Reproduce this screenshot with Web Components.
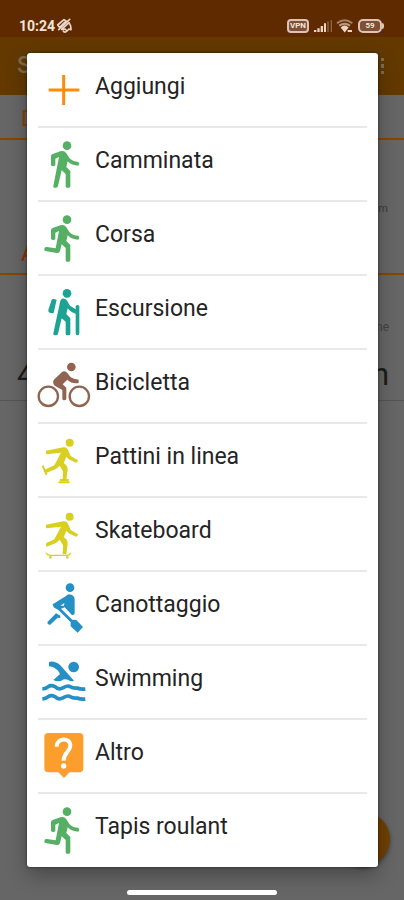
<!DOCTYPE html>
<html lang="it">
<head>
<meta charset="utf-8">
<meta name="viewport" content="width=device-width, initial-scale=1">
<title>Attività</title>
<style>
  body { margin: 0; font-family: Roboto, "Noto Sans", sans-serif; background: #666; }
</style>
</head>
<body>
<activity-screen></activity-screen>

<template id="status-bar">
  <style>
    :host { display: flex; align-items: center; justify-content: space-between; height: 37px; padding: 14px 20px 0 19px; box-sizing: border-box; background: #5f2a00; color: #f3e4d8; }
    div { display: flex; align-items: center; }
    time { font-size: 14px; line-height: 16px; font-weight: 700; }
    .right { gap: 4px; }
    .badge, .battery { box-sizing: border-box; border: 2px solid #dcc3b5; border-radius: 4px; height: 14px; width: 22px; font-size: 8px; line-height: 10px; font-weight: 700; text-align: center; background: #7d5038; }
    .battery { width: 24px; border-radius: 5px; }
    .tip { width: 2px; height: 6px; border-radius: 0 2px 2px 0; background: #dcc3b5; margin-left: -4px; }
    svg { display: block; }
  </style>
  <div><time>10:24</time>
    <svg width="19" height="18" viewBox="0 0 57 54" fill="none" stroke="#ead5c8" stroke-width="5" stroke-linecap="round" stroke-linejoin="round"><path d="M8 24L27 8 33 12 14 31ZM20 37L42 17 47 27 48 38 42 36 36 42 30 36ZM11 38L44 7M25 42q3 5 8 2"/></svg>
  </div>
  <div class="right">
    <span class="badge">VPN</span>
    <svg width="19" height="14" viewBox="0 0 57 42" fill="#ead5c8"><path d="M3 33h7v6H3zM13 28h7v11h-7zM23 21h7v18h-7zM33 13h6v26h-6z"/><path d="M43 7h4v32h-4zM53 3h4v36h-4z" opacity=".35"/></svg>
    <svg width="18" height="14" viewBox="0 0 54 42" fill="none" stroke="#ead5c8" stroke-width="6"><path d="M3 13Q26-5 49 13" opacity=".5"/><path d="M10 20Q26 8 42 20" opacity=".65"/><path d="M18 26Q26 19 34 26L26 36Z" fill="#ead5c8"/><path d="M35 36h13"/></svg>
    <span class="battery">59</span><span class="tip"></span>
  </div>
</template>

<template id="app-header">
  <style>
    :host { display: flex; align-items: center; justify-content: space-between; height: 58px; padding: 0 18px 0 17px; box-sizing: border-box; background: #633900; color: #7d6a50; }
    h1 { margin: 0; font-size: 23px; line-height: 28px; font-weight: 500; }
    button { border: 0; padding: 0; background: none; display: flex; }
  </style>
  <h1>S</h1>
  <button aria-label="Menu"><svg width="12" height="20" viewBox="0 0 12 20" fill="#77705f"><path d="M7 2h3v3H7zM7 8h3v4H7zM7 15h3v3H7z"/></svg></button>
</template>

<template id="stat-section">
  <style>
    :host { display: block; }
    header { height: 45px; box-sizing: border-box; padding: 0 21px; border-bottom: 2px solid #874500; font-size: 22px; line-height: 48px; }
  </style>
  <header><slot name="title"></slot></header>
  <slot></slot>
</template>

<template id="activity-icon">
  <style>
    :host { display: block; flex: none; }
    svg { display: block; }
    .f { fill: currentColor; stroke: none; }
  </style>
  <svg width="54" height="74" fill="none" stroke="currentColor" stroke-linecap="round" stroke-linejoin="round"></svg>
</template>

<template id="activity-row">
  <style>
    :host { display: block; padding: 0 11px 0 10px; }
    button { display: flex; align-items: center; width: 100%; height: 74px; box-sizing: border-box; border: 0; padding: 0; margin: 0; background: none; font: 23px/28px Roboto, "Noto Sans", sans-serif; color: #242424; text-align: left; gap: 4px; }
    hr { border: 0; height: 2px; margin: -1px 0 -1px 1px; background: #e9e9e9; }
    :host(:last-child) hr { display: none; }
    span { padding-bottom: 7px; white-space: nowrap; }
  </style>
  <button type="button"><activity-icon></activity-icon><span><slot></slot></span></button>
  <hr>
</template>

<template id="activity-dialog">
  <style>
    :host { display: block; background: #fff; border-radius: 3px; box-shadow: 0 0 3px rgba(0,0,0,.55), 0 8px 20px rgba(0,0,0,.3); }
  </style>
  <slot></slot>
</template>

<template id="activity-screen">
  <style>
    :host { display: block; position: relative; min-height: 100vh; background: #666; }
    main { display: block; }
    .body1 { height: 90px; padding: 62px 16px 0; box-sizing: border-box; text-align: right; font-size: 11px; line-height: 14px; color: #3c3c3c; }
    .body2 { display: flex; flex-direction: column; height: 126px; padding: 44px 15px 0 17px; box-sizing: border-box; border-bottom: 1px solid #555; text-align: right; color: #1c1c1c; }
    small { font-size: 12px; line-height: 16px; color: #444; }
    .values { display: flex; justify-content: space-between; font-size: 31px; line-height: 36px; margin-top: 22px; }
    .t1 { color: #864300; } .t2 { color: #972d00; }
    .overlay { position: absolute; inset: 53px 26px auto 27px; }
    .fab { position: absolute; right: 14px; bottom: 34px; width: 54px; height: 54px; border: 0; border-radius: 50%; background: #704000; box-shadow: 0 2px 4px rgba(0,0,0,.4); }
    .home { position: absolute; bottom: 5px; left: 0; right: 0; display: flex; justify-content: center; }
    .home i { width: 37%; height: 5px; border-radius: 3px; background: #fff; }
  </style>
  <status-bar></status-bar>
  <app-header></app-header>
  <main>
    <stat-section><span slot="title" class="t1">D</span><div class="body1">m</div></stat-section>
    <stat-section><span slot="title" class="t2">A</span><div class="body2"><small>ne</small><div class="values"><span>4</span><span>n</span></div></div></stat-section>
  </main>
  <button class="fab" aria-label="Avvia"></button>
  <div class="overlay"><activity-dialog role="dialog">
    <activity-row icon="add">Aggiungi</activity-row>
    <activity-row icon="walk">Camminata</activity-row>
    <activity-row icon="run">Corsa</activity-row>
    <activity-row icon="hike">Escursione</activity-row>
    <activity-row icon="bike">Bicicletta</activity-row>
    <activity-row icon="inline">Pattini in linea</activity-row>
    <activity-row icon="board">Skateboard</activity-row>
    <activity-row icon="row">Canottaggio</activity-row>
    <activity-row icon="swim">Swimming</activity-row>
    <activity-row icon="other">Altro</activity-row>
    <activity-row icon="run">Tapis roulant</activity-row>
  </activity-dialog></div>
  <div class="home"><i></i></div>
</template>

<script>
  const upperWalk = '<circle class="f" cx="201" cy="47" r="13"/><path class="f" d="M153 77Q154 74 158 72L181 64Q192 60 199 70L208 84Q217 95 235 96Q240 101 235 107Q216 107 203 94L199 111 211 123V169Q211 173 206 173H200Q197 173 197 169V132L185 121 174 168Q173 173 168 173H163Q159 173 160 168L177 81 166 86V106Q160 112 153 106Z"/>';
  const skater = '<circle class="f" cx="209" cy="68" r="12"/><path class="f" d="M138 92L190 82Q199 80 204 89L212 108 234 121Q233 128 228 128L205 117 199 110 191 130Q204 137 203 150L199 181H188L189 154 179 137 168 147 140 158Q136 153 139 147L163 136 183 98 140 103Q136 99 138 92Z"/>';
  // Each entry: colour, viewBox, markup.
  const ICONS = {
    add: ['#ff8b0a', '111 159 162 222', '<path stroke-width="9" stroke-linecap="butt" d="M146 270H238M191 225V315"/>'],
    walk: ['#55b063', '111 -9 162 222', upperWalk],
    run: ['#55b063', '111 213 162 222', '<circle class="f" cx="201" cy="269" r="13"/><path class="f" d="M153 300Q154 296 158 294L181 286Q192 282 199 292L208 306Q217 317 235 317Q240 323 235 329Q216 329 203 316L199 333 211 345V390Q211 395 206 395H200Q197 395 197 390V354L185 343 180 363Q178 370 171 369L136 363Q131 360 134 354Q135 350 140 351L167 355 177 303 166 308V327Q160 334 153 327Z"/>'],
    hike: ['#1ca393', '111 15 162 222', '<circle class="f" cx="201" cy="70" r="13"/><path class="f" d="M155 89Q157 86 161 87L170 89 161 128Q160 131 157 130L149 128Q144 126 145 120ZM181 92Q184 84 193 86Q199 87 202 94L210 107 227 118V108Q233 102 238 108V190Q238 196 232 196Q227 196 227 190V131Q211 127 203 115L199 132 211 145V191Q211 196 205 196H201Q197 196 197 191V155L185 145 174 191Q173 196 168 196H163Q159 195 160 190Z"/>'],
    bike: ['#8f6552', '111 237 162 222', '<g stroke-width="7"><circle cx="145" cy="379" r="29"/><circle cx="238" cy="379" r="29"/></g><circle class="f" cx="214" cy="291" r="13"/><path class="f" d="M163 328L187 305Q193 301 200 307L212 322Q220 328 236 329V339Q215 342 202 329L188 343 199 353V386Q198 391 192 391Q187 391 187 386V360L164 347Q155 337 163 328Z"/>'],
    inline: ['#d9cf20', '111 9 162 222', skater + '<path stroke-width="6" d="M129 139L139 162M134 153L146 148M182 180H204M178 187H206"/>'],
    board: ['#d9cf20', '111 231 162 222', '<g transform="translate(0 222)">' + skater + '</g><path stroke-width="4" d="M139 400Q142 405 150 406H201Q207 406 212 400"/><circle class="f" cx="151" cy="412" r="4"/><circle class="f" cx="202" cy="412" r="4"/>'],
    row: ['#2590c5', '111 3 162 222', '<circle class="f" cx="210" cy="53" r="13"/><path class="f" d="M158 103L197 79Q204 70 214 74Q224 78 224 89V130Q222 138 215 134L194 112 183 116 217 149 229 150 249 171 233 188 212 169V157L176 121 161 112ZM193 99L181 107H192ZM143 155L168 130 181 137V144L173 143 153 162Q149 168 142 160Z"/>'],
    swim: ['#2590c5', '111 225 162 222', '<circle class="f" cx="221" cy="291" r="16"/><path class="f" d="M147 276Q164 271 181 286L222 332Q213 336 205 330Q194 325 184 332Q173 337 160 330L180 312Q171 292 147 289Z"/><path stroke-width="11" stroke-linecap="butt" d="M127 357Q138 356 145 350T165 350Q176 361 190 353T211 350T232 354Q242 359 256 357M127 387Q138 386 145 380T165 380Q176 391 190 383T211 380T232 384Q242 389 256 387"/>'],
    other: ['#fb9e2b', '111 -3 162 222', '<path class="f" d="M145 39H238Q250 39 250 51V145Q250 157 238 157H209L192 174 175 157H145Q133 157 133 145V51Q133 39 145 39Z"/><path stroke="#fff" stroke-width="12" stroke-linecap="butt" d="M170 80C170 53 211 51 211 77C211 96 191 96 191 122"/><circle cx="191" cy="138" r="8" fill="#fff" stroke="none"/>']
  };

  class TemplateElement extends HTMLElement {
    constructor() {
      super();
      this.attachShadow({ mode: 'open' }).append(document.getElementById(this.localName).content.cloneNode(true));
    }
  }
  class ActivityIcon extends TemplateElement {
    static observedAttributes = ['name'];
    attributeChangedCallback(attr, old, value) {
      const [color, box, markup] = ICONS[value];
      const svg = this.shadowRoot.querySelector('svg');
      svg.style.color = color;
      svg.setAttribute('viewBox', box);
      svg.innerHTML = markup;
    }
  }
  class ActivityRow extends TemplateElement {
    connectedCallback() {
      this.shadowRoot.querySelector('activity-icon').setAttribute('name', this.getAttribute('icon'));
    }
  }
  customElements.define('status-bar', class extends TemplateElement {});
  customElements.define('app-header', class extends TemplateElement {});
  customElements.define('stat-section', class extends TemplateElement {});
  customElements.define('activity-icon', ActivityIcon);
  customElements.define('activity-row', ActivityRow);
  customElements.define('activity-dialog', class extends TemplateElement {});
  customElements.define('activity-screen', class extends TemplateElement {});
</script>
</body>
</html>
